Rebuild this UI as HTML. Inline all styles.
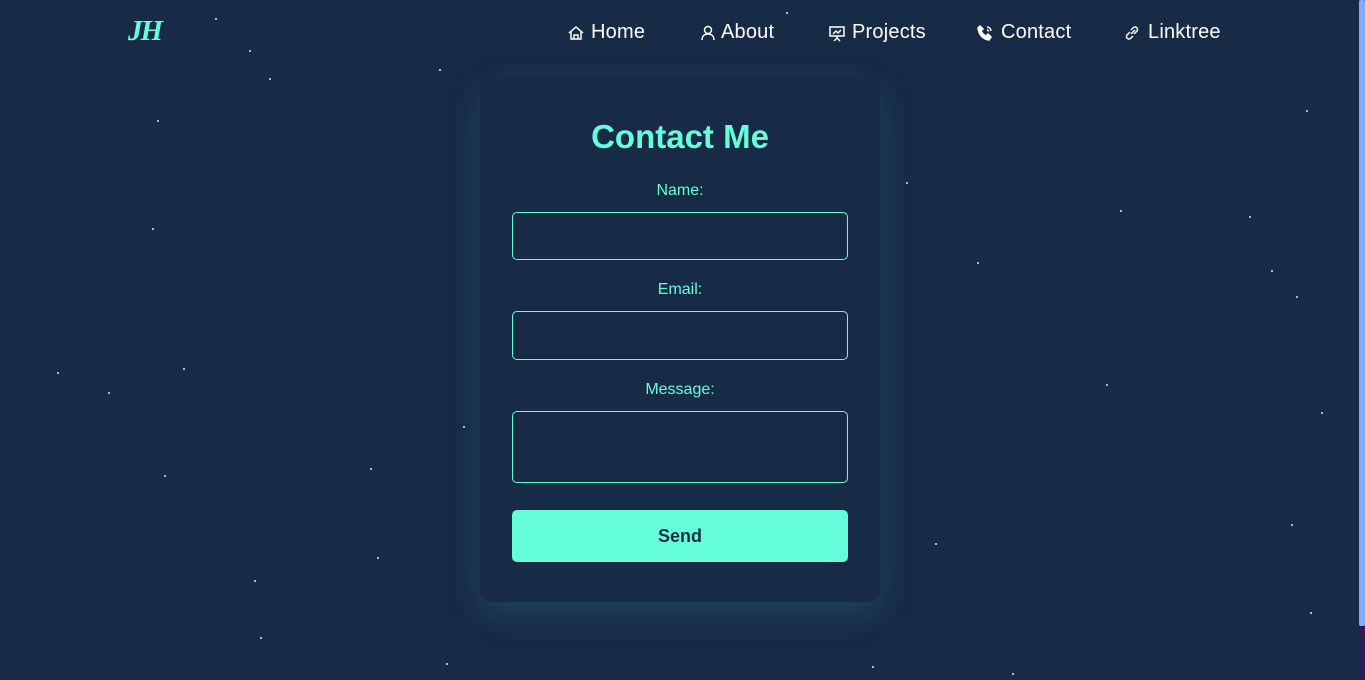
<!DOCTYPE html>
<html><head><meta charset="utf-8"><style>
*{margin:0;padding:0;box-sizing:border-box}
html,body{width:1365px;height:680px;overflow:hidden;background:#172a46;font-family:"Liberation Sans",sans-serif}
.s{position:absolute;width:2px;height:2px;background:#dfe6f0;border-radius:1px}
.logo{position:absolute;left:128px;top:15px;font-family:"Liberation Serif",serif;font-style:italic;font-weight:bold;font-size:29px;color:#64ffda;letter-spacing:-2px}
.n{position:absolute;top:21px;color:#fff;font-size:20px;letter-spacing:0.2px;display:flex;align-items:center;height:24px}
.n svg{position:absolute;left:0;top:3px;width:18px;height:18px;fill:none;stroke:#fff;stroke-width:1.5}
.n span{position:absolute;white-space:nowrap;top:0}
.card{position:absolute;left:480px;top:77px;width:400px;height:525px;background:#172a46;border-radius:12px;box-shadow:0 12px 35px rgba(100,255,218,.13)}
h1{position:absolute;top:118px;left:480px;width:400px;text-align:center;color:#64ffda;font-size:33px;font-weight:bold}
label{position:absolute;left:480px;width:400px;text-align:center;color:#64ffda;font-size:16px}
.in{position:absolute;left:512px;width:336px;border:1px solid #64ffda;border-radius:5px}
.btn{position:absolute;left:512px;top:510px;width:336px;height:52px;background:#64ffda;border-radius:5px;text-align:center;line-height:52px;color:#172a46;font-size:18px;font-weight:bold}
.sb{position:absolute;left:1359px;top:0;width:6px;height:626px;background:#86a8ff;border-radius:2px}
.sb2{position:absolute;left:1359px;top:626px;width:6px;height:54px;background:#2e1a55}
</style></head><body>
<div class="s" style="left:215px;top:18px"></div><div class="s" style="left:249px;top:50px"></div><div class="s" style="left:269px;top:78px"></div><div class="s" style="left:157px;top:120px"></div><div class="s" style="left:152px;top:228px"></div><div class="s" style="left:57px;top:372px"></div><div class="s" style="left:183px;top:368px"></div><div class="s" style="left:108px;top:392px"></div><div class="s" style="left:164px;top:475px"></div><div class="s" style="left:370px;top:468px"></div><div class="s" style="left:463px;top:426px"></div><div class="s" style="left:377px;top:557px"></div><div class="s" style="left:254px;top:580px"></div><div class="s" style="left:260px;top:637px"></div><div class="s" style="left:446px;top:663px"></div><div class="s" style="left:439px;top:69px"></div><div class="s" style="left:786px;top:12px"></div><div class="s" style="left:906px;top:182px"></div><div class="s" style="left:1120px;top:210px"></div><div class="s" style="left:1249px;top:216px"></div><div class="s" style="left:1271px;top:270px"></div><div class="s" style="left:1296px;top:296px"></div><div class="s" style="left:1306px;top:110px"></div><div class="s" style="left:1106px;top:384px"></div><div class="s" style="left:1291px;top:524px"></div><div class="s" style="left:935px;top:543px"></div><div class="s" style="left:1310px;top:612px"></div><div class="s" style="left:872px;top:666px"></div><div class="s" style="left:1012px;top:673px"></div><div class="s" style="left:977px;top:262px"></div><div class="s" style="left:1321px;top:412px"></div>
<div class="logo">JH</div>
<div class="n" style="left:567px"><svg viewBox="0 0 18 18"><path d="M2 9 9 3l7 6M4 8v7h10V8M7 15v-4h4v4"/></svg><span style="left:24px">Home</span></div>
<div class="n" style="left:699px"><svg viewBox="0 0 18 18"><circle cx="9" cy="6" r="3.5"/><path d="M3 16c0-4 2.5-6 6-6s6 2 6 6"/></svg><span style="left:22px">About</span></div>
<div class="n" style="left:828px"><svg viewBox="0 0 18 18"><rect x="2" y="3" width="14" height="9"/><path d="M5 10l3-3 2 2 3-3M9 12v2M6 17l3-3 3 3"/></svg><span style="left:24px">Projects</span></div>
<div class="n" style="left:976px"><svg viewBox="0 0 18 18"><path d="M4 2l3 3-2 2c1 2 3 4 5 5l2-2 3 3-2 3C7 15 3 11 2 4z" fill="#fff"/><path d="M11 3a4 4 0 0 1 4 4M11 6a1.5 1.5 0 0 1 1.5 1.5"/></svg><span style="left:25px">Contact</span></div>
<div class="n" style="left:1123px"><svg viewBox="0 0 18 18"><path d="M8 10l4-4M7 8 4 11a2.5 2.5 0 0 0 3.5 3.5L10 12M11 10l3-3a2.5 2.5 0 0 0-3.5-3.5L8 6"/></svg><span style="left:25px">Linktree</span></div>
<div class="card"></div>
<h1>Contact Me</h1>
<label style="top:182px">Name:</label>
<div class="in" style="top:212px;height:48px"></div>
<label style="top:281px">Email:</label>
<div class="in" style="top:311px;height:49px"></div>
<label style="top:381px">Message:</label>
<div class="in" style="top:411px;height:72px"></div>
<div class="btn">Send</div>
<div class="sb"></div><div class="sb2"></div>
</body></html>
